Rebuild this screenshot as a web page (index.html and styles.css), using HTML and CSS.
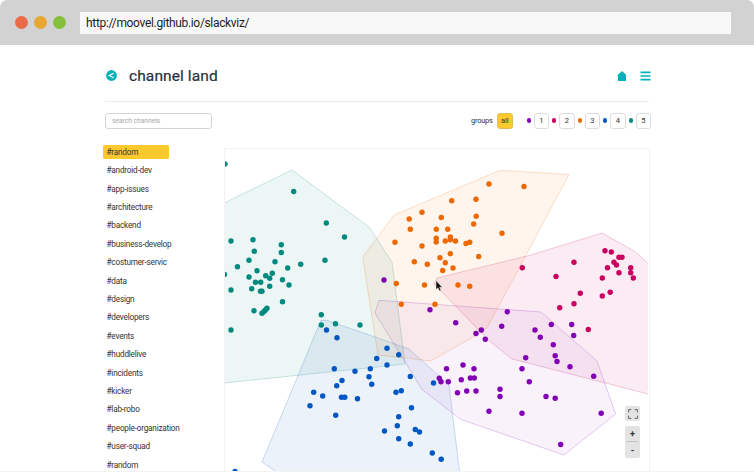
FILE: index.html
```html
<!DOCTYPE html>
<html lang="en">
<head>
<meta charset="utf-8">
<title>channel land</title>
<link rel="stylesheet" href="styles.css">
</head>
<body>
<div class="browser">
  <div class="chrome">
    <span class="light red"></span><span class="light amber"></span><span class="light green"></span>
    <div class="address">http://moovel.github.io/slackviz/</div>
  </div>
  <main class="page">
    <header class="header">
      <svg class="back" viewBox="0 0 11 11"><circle cx="5.5" cy="5.5" r="5.4" fill="#00b3b8"/><path d="M7.6 3.3 3.3 5.5l4.3 2.2" fill="none" stroke="#fff" stroke-width="1.1"/></svg>
      <h1>channel land</h1>
      <svg class="home" viewBox="0 0 10 10"><path d="M5 0 9.9 4.4H9V10H1V4.4H.1z" fill="#00b3b8"/></svg>
      <svg class="menu" viewBox="0 0 11 10"><path d="M.5 1.4h10M.5 5h10M.5 8.6h10" stroke="#00b3b8" stroke-width="1.7"/></svg>
    </header>
    <div class="toolbar">
      <div class="search">search channels</div>
      <span class="label">groups</span>
      <span class="btn all">all</span>
      <i class="dot purple"></i><span class="btn">1</span>
      <i class="dot pink"></i><span class="btn">2</span>
      <i class="dot orange"></i><span class="btn">3</span>
      <i class="dot blue"></i><span class="btn">4</span>
      <i class="dot teal"></i><span class="btn">5</span>
    </div>
    <div class="content">
      <ul class="channels">
        <li class="active"><span>#random</span></li>
        <li><span>#android-dev</span></li>
        <li><span>#app-issues</span></li>
        <li><span>#architecture</span></li>
        <li><span>#backend</span></li>
        <li><span>#business-develop</span></li>
        <li><span>#costumer-servic</span></li>
        <li><span>#data</span></li>
        <li><span>#design</span></li>
        <li><span>#developers</span></li>
        <li><span>#events</span></li>
        <li><span>#huddlelive</span></li>
        <li><span>#incidents</span></li>
        <li><span>#kicker</span></li>
        <li><span>#lab-robo</span></li>
        <li><span>#people-organization</span></li>
        <li><span>#user-squad</span></li>
        <li><span>#random</span></li>
      </ul>
      <div class="plot">
        <svg id="chart" viewBox="225 148 423 323"></svg>
        <div class="controls">
          <div class="control fit"><svg viewBox="0 0 10 10"><path d="M.6 3.4V.6h2.8M6.6.6h2.8v2.8M9.4 6.6v2.8H6.6M3.4 9.4H.6V6.6" fill="none" stroke="#666" stroke-width="1"/></svg></div>
          <div class="control zoom"><span>+</span><span>-</span></div>
        </div>
      </div>
    </div>
  </main>
</div>
<script src="chart.js"></script>
</body>
</html>
```
FILE: styles.css
```css
* { box-sizing: border-box; }
body { margin: 0; background: #fff; font-family: Roboto, sans-serif; color: #333; }
.browser { width: 754px; height: 472px; overflow: hidden; border-bottom: 1px solid #f3f3f3; }
.chrome { height: 45px; display: flex; align-items: center; padding-left: 15px; background: #d2d2d2; border-radius: 7px 7px 0 0; }
.light { width: 13px; height: 13px; border-radius: 50%; margin-right: 6px; }
.red { background: #e96b48; }
.amber { background: #e8a733; }
.green { background: #84c13a; }
.address { margin-left: 8px; width: 651px; height: 22px; padding-left: 6px; background: #f8f8f8; color: #1d1d1d; font-size: 12px; line-height: 22px; letter-spacing: -.33px; white-space: nowrap; }
.page { padding-left: 105px; }
.header { width: 544px; height: 57px; display: flex; align-items: center; border-bottom: 1px solid #ebebeb; }
.header > * { margin-top: 5px; }
.back { width: 11px; height: 11px; margin-left: 1px; flex: none; }
h1 { margin: 3px auto 0 12px; color: #26323f; font-size: 15.5px; font-weight: 400; line-height: 20px; letter-spacing: .1px; white-space: nowrap; -webkit-text-stroke: .2px #26323f; }
.home { width: 10px; height: 10px; flex: none; margin-right: 13px; }
.menu { width: 11px; height: 10px; flex: none; margin-right: -2px; }
.toolbar { width: 546px; height: 37px; display: flex; align-items: center; font-size: 7.5px; }
.search { width: 107px; height: 16px; margin-right: auto; padding-left: 6px; border: 1px solid #d4d4d4; border-radius: 3px; color: #aaa; font-size: 6.7px; line-height: 15px; letter-spacing: -.02px; }
.label { margin-right: 4.5px; letter-spacing: -.27px; }
.btn { width: 15.5px; height: 16px; border: 1px solid #ddd; border-radius: 3px; text-align: center; line-height: 14px; }
.all { margin-right: 14px; background: #ffc92e; border-color: #e0bd5a; }
.dot { width: 4.4px; height: 4.4px; border-radius: 50%; margin-right: 2.6px; }
.btn + .dot { margin-left: 3px; }
.all + .dot { margin-left: 0; }
.purple { background: #8200b4; }
.pink { background: #c90060; }
.orange { background: #ed6800; }
.blue { background: #0057c2; }
.teal { background: #00897f; }
.content { display: flex; height: 332px; margin-left: -2px; }
.channels { width: 121px; flex: none; list-style: none; margin: 0; padding: 3.6px 0 0; font-size: 8.2px; letter-spacing: -.2px; }
.channels li { height: 18.41px; display: flex; align-items: center; white-space: nowrap; }
.channels span { width: 66px; height: 14px; padding-left: 3.5px; line-height: 14px; }
.active span { background: #ffc92e; border-radius: 2px; }
.plot { position: relative; width: 426px; height: 323px; margin-top: 9px; border: 1px solid #f2f2f2; border-bottom: 0; }
#chart { display: block; width: 423px; height: 323px; margin-top: -1px; }
.controls { position: absolute; right: 9px; top: 257px; }
.control { width: 15px; background: #e3e3e3; border-radius: 2px; }
.fit { height: 15px; display: grid; place-items: center; margin-bottom: 5px; }
.fit svg { width: 10px; height: 10px; }
.zoom { height: 32px; padding: 0 2px; }
.zoom span { display: block; height: 16px; text-align: center; font-size: 9px; font-weight: 700; line-height: 16px; }
.zoom span:first-child { border-bottom: 1px solid #c2c2c2; }
```
FILE: chart.js
```js
const groups = [
  { color: '#00897f', fill: '#00897f', hull: '220,205 292,170 369,227 392,262 405,364 220,383.5',
    points: [[225,164],[293.7,191.5],[326.3,223],[344.5,237],[231,241],[253,239.7],[281.3,244.7],[281.3,252.5],[254.3,251.3],[249,260.3],[237.5,266.7],[275,261.7],[287.7,268],[300.7,264.2],[325,260.3],[224.5,274.5],[249,277],[257,270.7],[265.7,275.8],[272.3,273.3],[269.7,278.3],[255.5,282.3],[260.7,282.3],[251.7,288.7],[269.7,286.2],[282.5,279.7],[289,285],[231,290],[260.5,291.3],[262,291.3],[282.5,301.7],[254,310.7],[262,313.3],[264,311.5],[265.5,310],[267,308.3],[231,330],[321.3,314.7],[321.3,325],[335.5,323.7],[360,325]] },
  { color: '#ed6800', fill: '#ff7800', hull: '394,215 500,170.3 569,174.5 487,328 480,333 431,361 378,355 362.7,257',
    points: [[489,184],[524,186.5],[502,233.3],[451.7,200.7],[476,199.3],[422,212.3],[409.2,219],[441.3,217.5],[476.2,216.3],[473.7,224],[410.3,229.3],[436.3,229.3],[447.7,229.3],[395,242.3],[422,246],[436.2,238.3],[436.2,242],[445.3,241],[450.3,237],[450.3,239.7],[455.5,241],[466,243.5],[469.7,242.3],[450.3,253.7],[440,257.7],[478.7,256.5],[414.3,261.7],[427.3,264.2],[445.3,262.8],[442.7,270.5],[453,268],[396.3,283.5],[424.5,285],[458,285],[469.7,286.3],[401.3,304.3],[435,304.3]] },
  { color: '#c90060', fill: '#c90060', hull: '437,278 531,255 602,233 635,251.5 652,267 652,395 512,359 490,341.5 434,284',
    points: [[522.3,267.7],[574,262.3],[556,276.5],[605,250.7],[611.3,252],[619,257.2],[622,257.2],[614,262.3],[616.5,265],[607.5,267.7],[619,272.7],[630.7,267.7],[630.7,272.7],[633.3,278],[602.3,278],[580.3,293.3],[602.3,296],[610.2,292.2],[574,303.7],[559.7,307.7],[588.3,329.5]] },
  { color: '#8200b4', fill: '#8200b4', opacity: .05, hull: '379,300.3 541,312 597,361 615.7,414 564,455 461,419.5 422,389.5 375,313',
    points: [[384,280],[430,309.7],[455.7,322.7],[481.3,330],[476,333.5],[485.3,339.3],[507.3,311.7],[501.7,326.3],[551.3,324.5],[571.7,324.5],[573.7,335.5],[535,330],[540.3,337.3],[553.3,344.7],[555.2,355.8],[557,361.5],[525.7,357.7],[570,366.7],[446.5,368.7],[463,365],[474,368.7],[439.3,378.3],[441,381.8],[448.3,381.8],[461.3,379.8],[470.3,378],[474.3,378],[457.5,392.8],[466.7,391],[476,391],[500,389.2],[500,396.5],[489,411.3],[522,413.3],[522,368.7],[529.3,381.8],[546,396.5],[555.2,398.3],[601.2,413.3],[560.7,444.5],[593.7,376.2]] },
  { color: '#0057c2', fill: '#0057c2', hull: '321,320.3 327,320.3 378,338 409,349 449,385 460,475 281,475 262,462',
    points: [[326.5,330],[337,337.7],[387,348.2],[398.7,354.7],[376.7,358.5],[387,365],[370.3,368.7],[355,371.3],[334.3,368.7],[342,380.5],[336.7,385.7],[369,376.7],[371.7,384.3],[410.3,376.5],[313.7,392.2],[322.7,396],[341.5,397.3],[344.8,397.3],[357.5,398.7],[310,405.7],[335.7,415.3],[396,392.2],[401.3,390.7],[411.5,407.7],[398.7,416.7],[397.3,425.7],[384.5,431],[415.3,429.5],[419.5,432],[398.7,438.7],[410.3,444],[432.3,453],[441.2,459.3],[433.5,383],[235,471.5]] }
];
const hulls = groups.map(g => `<polygon points="${g.hull}" fill="${g.fill}" fill-opacity="${g.opacity || .075}" stroke="${g.color}" stroke-opacity=".2"/>`);
const dots = groups.map(g => `<g fill="${g.color}">${g.points.map(p => `<circle cx="${p[0]}" cy="${p[1]}" r="2.7"/>`).join('')}</g>`);
const cursor = '<path d="M436 280.5v9l2-1.7 1.5 3.2 1.5-.7-1.4-3.1h2.6z" fill="#111" stroke="#fff" stroke-width=".4"/>';
document.getElementById('chart').innerHTML = hulls.join('') + dots.join('') + cursor;
```
